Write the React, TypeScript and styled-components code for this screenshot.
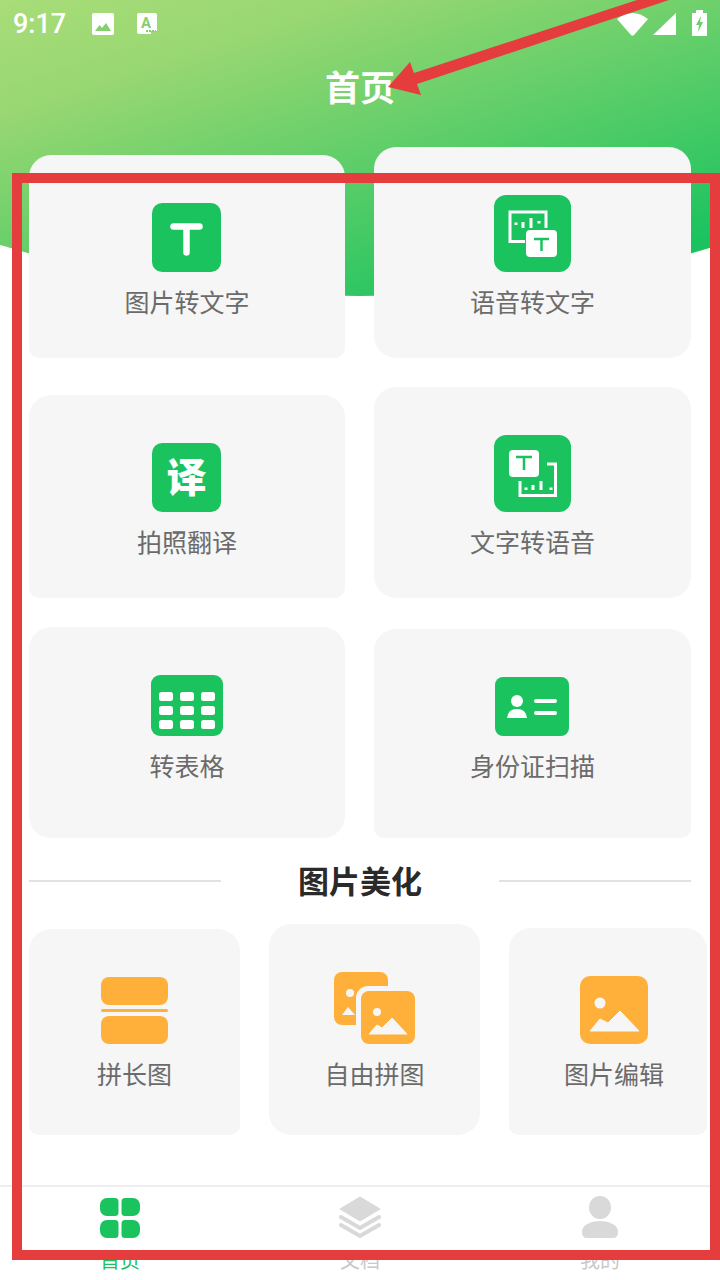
import { ReactNode } from 'react';
import styled, { createGlobalStyle } from 'styled-components';

const GREEN = '#1bc35f';
const ORANGE = '#ffb03b';
const GREY = '#d9d9d9';
const RED = '#e53d3d';

const GlobalStyle = createGlobalStyle`
  html, body {
    margin: 0;
    padding: 0;
    background: #fff;
  }
  * {
    box-sizing: border-box;
  }
`;

const Page = styled.div`
  position: relative;
  isolation: isolate;
  width: 720px;
  height: 1280px;
  overflow: hidden;
  background: #fff;
  font-family: 'Noto Sans CJK SC', 'Noto Sans', sans-serif;

  &::before {
    content: '';
    position: absolute;
    z-index: -1;
    top: 0;
    left: 0;
    width: 720px;
    height: 296px;
    background: linear-gradient(162deg, #a8dd79 0%, #98d772 22%, #1bc35f 88%);
    clip-path: ellipse(641px 296px at 50% 0);
  }
`;

const StatusBar = styled.div`
  display: flex;
  align-items: center;
  height: 48px;
  padding: 0 13px;
`;

const Clock = styled.span`
  width: 54px;
  margin-right: 25px;
  font-family: Roboto, sans-serif;
  font-size: 27px;
  font-weight: 500;
  color: #fff;
`;

const StatusLeft = styled.div`
  display: flex;
  align-items: center;
  gap: 23px;
`;

const StatusRight = styled.div`
  display: flex;
  align-items: center;
  margin-left: auto;
`;

const SignalSvg = styled.svg`
  margin: 0 16px 0 5px;
`;

const BatterySvg = styled.svg`
  margin-bottom: 2px;
`;

const Title = styled.h1`
  height: 99px;
  margin: 0;
  font-size: 35px;
  font-weight: 700;
  line-height: 76px;
  text-align: center;
  color: #fff;
`;

const FeatureGrid = styled.div`
  display: grid;
  grid-template-columns: 316px 317px;
  grid-auto-rows: 211px;
  gap: 29px;
  padding: 0 29px;
`;

const Card = styled.div<{ $height: number; $flat?: boolean }>`
  display: flex;
  flex-direction: column;
  align-items: center;
  align-self: end;
  height: ${(p) => p.$height}px;
  padding-top: 48px;
  background: #f6f6f6;
  border-radius: ${(p) => (p.$flat ? '22px 22px 10px 10px' : '22px')};
`;

const Label = styled.div`
  margin-top: 14px;
  font-size: 25px;
  line-height: 30px;
  color: #6b6b6b;
`;

const GlyphIcon = styled.div`
  display: flex;
  align-items: center;
  justify-content: center;
  width: 69px;
  height: 69px;
  margin-right: 1px;
  padding-bottom: 6px;
  border-radius: 10px;
  background: ${GREEN};
  font-size: 40px;
  font-weight: 900;
  line-height: 1;
  color: #fff;
`;

const SectionHeading = styled.div`
  display: flex;
  align-items: center;
  height: 86px;
  padding: 0 29px;
`;

const Rule = styled.div`
  flex: 1;
  height: 2px;
  background: #e2e2e2;
`;

const SectionTitle = styled.h2`
  width: 278px;
  margin: 0 0 4px;
  font-size: 31px;
  font-weight: 700;
  text-align: center;
  color: #2a2a2a;
`;

const ToolRow = styled.div`
  display: flex;
  align-items: flex-end;
  gap: 29px;
  height: 211px;
  padding-left: 29px;
`;

const ToolCard = styled(Card)<{ $width: number; $inset?: number }>`
  flex: none;
  width: ${(p) => p.$width}px;
  padding-left: ${(p) => p.$inset ?? 0}px;
`;

const TabBar = styled.nav`
  display: grid;
  grid-template-columns: repeat(3, 1fr);
  height: 95px;
  margin-top: 50px;
  padding-top: 9px;
  border-top: 2px solid #eeeeee;
`;

const Tab = styled.div<{ $active?: boolean }>`
  display: flex;
  flex-direction: column;
  align-items: center;
  gap: 10px;
  font-size: 20px;
  line-height: 24px;
  color: ${(p) => (p.$active ? GREEN : '#c8c8c8')};
`;

const TabIcon = styled.div`
  display: flex;
  align-items: flex-end;
  height: 42px;
`;

const Frame = styled.div`
  position: absolute;
  top: 173px;
  left: 12px;
  width: 708px;
  height: 1087px;
  border: 10px solid ${RED};
`;

const Overlay = styled.svg`
  position: absolute;
  top: 0;
  left: 0;
`;

const PictureIcon = () => (
  <svg width="22" height="22" viewBox="0 0 22 22">
    <rect width="22" height="22" rx="2" fill="#fff" />
    <path d="M3 18 L7.500 12 L10 15 L14 10 L19 18 Z" fill="#86cf6f" />
  </svg>
);

const FontIcon = () => (
  <svg width="20" height="22" viewBox="0 0 20 22">
    <path d="M2 0 H18 a2 2 0 0 1 2 2 V18 H14 V21 H2 a2 2 0 0 1 -2 -2 V2 a2 2 0 0 1 2 -2 Z" fill="#fff" />
    <text x="9" y="14.500" textAnchor="middle" fontFamily="Roboto, sans-serif" fontSize="15" fontWeight="700" fill="#86cf6f">
      A
    </text>
    <path d="M9 18 H19" stroke="#86cf6f" strokeWidth="2" strokeDasharray="2 1" />
  </svg>
);

const WifiIcon = () => (
  <svg width="31" height="24" viewBox="0 0 31 24">
    <path d="M0 7 Q15.500 -5 31 7 L17 23 Q15.500 24.500 14 23 Z" fill="#fff" />
  </svg>
);

const SignalIcon = () => (
  <SignalSvg width="23" height="22" viewBox="0 0 23 22">
    <path d="M0 22 L23 0 V22 Z" fill="#fff" />
  </SignalSvg>
);

const BatteryIcon = () => (
  <BatterySvg width="15" height="26" viewBox="0 0 15 26">
    <path d="M4 0 H11 V3 H15 V26 H0 V3 H4 Z" fill="#fff" />
    <path d="M9 6 L4 15 H7 L6 22 L11 12 H8 Z" fill="#6fcd6b" />
  </BatterySvg>
);

const TextIcon = () => (
  <svg width="70" height="69" viewBox="0 0 70 69">
    <rect width="69" height="69" rx="10" fill={GREEN} />
    <path d="M21.500 23.500 H47.500 M34.500 23.500 V49.500" stroke="#fff" strokeWidth="6.500" strokeLinecap="round" fill="none" />
  </svg>
);

const VoiceToTextIcon = () => (
  <svg width="77" height="77" viewBox="0 0 77 77">
    <rect width="77" height="77" rx="12" fill={GREEN} />
    <path d="M31 46.500 H16 V17 H52 V33" stroke="#fff" strokeWidth="3" fill="none" />
    <path d="M22 27.500 V30 M29 27 V33 M37 23 V33 M45 26 V28.500" stroke="#fff" strokeWidth="3" fill="none" />
    <rect x="32" y="35" width="31" height="27" rx="4" fill="#fff" />
    <path d="M40 44 H55 M47.500 44 V56" stroke={GREEN} strokeWidth="2.500" fill="none" />
  </svg>
);

const TextToVoiceIcon = () => (
  <svg width="77" height="77" viewBox="0 0 77 77">
    <rect width="77" height="77" rx="12" fill={GREEN} />
    <path d="M53 29 H61.500 V60.500 H26 V46" stroke="#fff" strokeWidth="3" fill="none" />
    <path d="M32 52.500 V55 M39 50 V55 M47 46 V55 M57 52.500 V55" stroke="#fff" strokeWidth="3" fill="none" />
    <rect x="15" y="15" width="30" height="27" rx="4" fill="#fff" />
    <path d="M22 22 H38 M30 22 V35" stroke={GREEN} strokeWidth="2.500" fill="none" />
  </svg>
);

const TableIcon = () => (
  <svg width="72" height="61" viewBox="0 0 72 61">
    <rect width="72" height="61" rx="9" fill={GREEN} />
    {[17, 31, 45].map((y) =>
      [8, 29, 50].map((x) => <rect key={`${x}-${y}`} x={x} y={y} width="14" height="9" rx="2.500" fill="#fff" />),
    )}
  </svg>
);

const IdCardIcon = () => (
  <svg width="75" height="59" viewBox="0 0 75 59">
    <rect width="74" height="59" rx="8" fill={GREEN} />
    <circle cx="22" cy="24" r="6" fill="#fff" />
    <path d="M12 41 Q13 32 22 32 Q31 32 32 41 Z" fill="#fff" />
    <rect x="39" y="22" width="23" height="4" rx="2" fill="#fff" />
    <rect x="39" y="34" width="23" height="4" rx="2" fill="#fff" />
  </svg>
);

const LongImageIcon = () => (
  <svg width="67" height="67" viewBox="0 0 67 67">
    <rect width="67" height="28" rx="8" fill={ORANGE} />
    <rect y="32" width="67" height="3" rx="1.500" fill={ORANGE} />
    <rect y="39" width="67" height="28" rx="8" fill={ORANGE} />
  </svg>
);

const CollageIcon = () => (
  <svg width="81" height="72" viewBox="0 0 81 72">
    <rect width="54" height="53" rx="8" fill={ORANGE} />
    <circle cx="16" cy="21" r="4" fill="#f6f6f6" />
    <path d="M8 43 L14 35 L21 43 Z" fill="#f6f6f6" />
    <rect x="22" y="14" width="64" height="63" rx="12" fill="#f6f6f6" />
    <rect x="27" y="19" width="54" height="53" rx="8" fill={ORANGE} />
    <circle cx="43" cy="40" r="4" fill="#f6f6f6" />
    <path d="M35 62 L43 53 L48 56 L58 46 L73 62 Z" fill="#f6f6f6" stroke="#f6f6f6" strokeLinejoin="round" />
  </svg>
);

const ImageEditIcon = () => (
  <svg width="68" height="68" viewBox="0 0 68 68">
    <rect width="68" height="68" rx="10" fill={ORANGE} />
    <circle cx="20" cy="27" r="5.500" fill="#f6f6f6" />
    <path d="M10 55 L20 43 L28 47 L40 35 L59 55 Z" fill="#f6f6f6" stroke="#f6f6f6" strokeLinejoin="round" />
  </svg>
);

const HomeTabIcon = () => (
  <svg width="40" height="40" viewBox="0 0 40 40">
    <path d="M7 0 H15 a3.500 3.500 0 0 1 3.500 3.500 V14.500 a3.500 3.500 0 0 1 -3.500 3.500 H7 a7 7 0 0 1 -7 -7 V7 a7 7 0 0 1 7 -7 Z" fill={GREEN} />
    <path d="M33 0 H25 a3.500 3.500 0 0 0 -3.500 3.500 V14.500 a3.500 3.500 0 0 0 3.500 3.500 H33 a7 7 0 0 0 7 -7 V7 a7 7 0 0 0 -7 -7 Z" fill={GREEN} />
    <path d="M7 40 H15 a3.500 3.500 0 0 0 3.500 -3.500 V25.500 a3.500 3.500 0 0 0 -3.500 -3.500 H7 a7 7 0 0 0 -7 7 V33 a7 7 0 0 0 7 7 Z" fill={GREEN} />
    <path d="M33 40 H25 a3.500 3.500 0 0 1 -3.500 -3.500 V25.500 a3.500 3.500 0 0 1 3.500 -3.500 H33 a7 7 0 0 1 7 7 V33 a7 7 0 0 1 -7 7 Z" fill={GREEN} />
  </svg>
);

const DocsTabIcon = () => (
  <svg width="42" height="42" viewBox="0 0 42 42">
    <path d="M21 1 L41 13 L21 25 L1 13 Z" fill={GREY} stroke={GREY} strokeLinejoin="round" />
    <path d="M2 21 L21 32 L40 21" fill="none" stroke={GREY} strokeWidth="4" strokeLinecap="round" strokeLinejoin="round" />
    <path d="M2 29 L21 40 L40 29" fill="none" stroke={GREY} strokeWidth="4" strokeLinecap="round" strokeLinejoin="round" />
  </svg>
);

const MeTabIcon = () => (
  <svg width="36" height="42" viewBox="0 0 36 42">
    <ellipse cx="18" cy="11.500" rx="11" ry="11.500" fill={GREY} />
    <path d="M0 36 C0 29 8 25 18 25 C28 25 36 29 36 36 C36 40 34 42 31 42 H5 C2 42 0 40 0 36 Z" fill={GREY} />
  </svg>
);

type Feature = { name: string; height: number; flat?: boolean; icon: ReactNode };

const features: Feature[] = [
  { name: '图片转文字', height: 203, flat: true, icon: <TextIcon /> },
  { name: '语音转文字', height: 211, icon: <VoiceToTextIcon /> },
  { name: '拍照翻译', height: 203, flat: true, icon: <GlyphIcon>译</GlyphIcon> },
  { name: '文字转语音', height: 211, icon: <TextToVoiceIcon /> },
  { name: '转表格', height: 211, icon: <TableIcon /> },
  { name: '身份证扫描', height: 209, flat: true, icon: <IdCardIcon /> },
];

const tools = [
  { name: '拼长图', width: 211, height: 206, flat: true, icon: <LongImageIcon /> },
  { name: '自由拼图', width: 211, height: 211, icon: <CollageIcon /> },
  { name: '图片编辑', width: 198, inset: 12, height: 207, flat: true, icon: <ImageEditIcon /> },
];

const tabs = [
  { name: '首页', active: true, icon: <HomeTabIcon /> },
  { name: '文档', icon: <DocsTabIcon /> },
  { name: '我的', icon: <MeTabIcon /> },
];

const App = () => {
  return (
    <Page>
      <GlobalStyle />
      <StatusBar>
        <Clock>9:17</Clock>
        <StatusLeft>
          <PictureIcon />
          <FontIcon />
        </StatusLeft>
        <StatusRight>
          <WifiIcon />
          <SignalIcon />
          <BatteryIcon />
        </StatusRight>
      </StatusBar>
      <Title>首页</Title>

      <FeatureGrid>
        {features.map((item) => (
          <Card key={item.name} $height={item.height} $flat={item.flat}>
            {item.icon}
            <Label>{item.name}</Label>
          </Card>
        ))}
      </FeatureGrid>

      <SectionHeading>
        <Rule />
        <SectionTitle>图片美化</SectionTitle>
        <Rule />
      </SectionHeading>

      <ToolRow>
        {tools.map((item) => (
          <ToolCard key={item.name} $width={item.width} $inset={item.inset} $height={item.height} $flat={item.flat}>
            {item.icon}
            <Label>{item.name}</Label>
          </ToolCard>
        ))}
      </ToolRow>

      <TabBar>
        {tabs.map((tab) => (
          <Tab key={tab.name} $active={tab.active}>
            <TabIcon>{tab.icon}</TabIcon>
            {tab.name}
          </Tab>
        ))}
      </TabBar>

      {/* red annotation drawn over the screenshot */}
      <Frame />
      <Overlay width="720" height="1280" viewBox="0 0 720 1280">
        <path d="M388 87 L410 62 L414 73 L637 0 L669 0 L417 84 L421 95 Z" fill={RED} />
      </Overlay>
    </Page>
  );
};

export default App;
